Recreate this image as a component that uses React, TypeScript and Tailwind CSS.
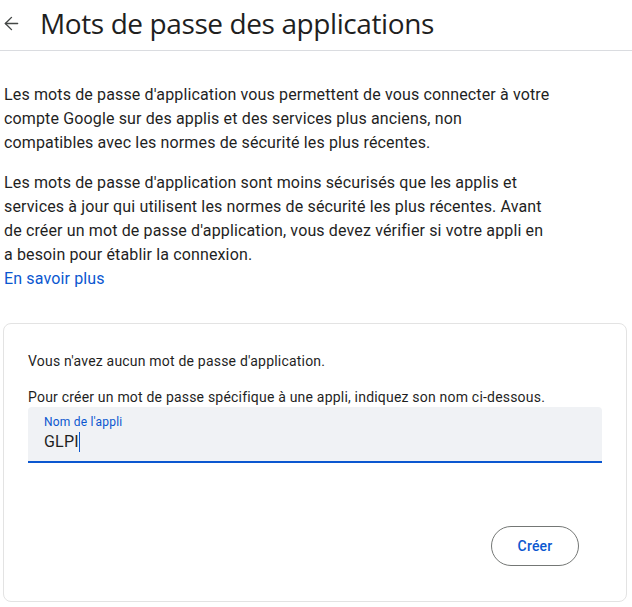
import { ArrowLeft } from "lucide-react";

const intro = [
  "Les mots de passe d'application vous permettent de vous connecter à votre",
  "compte Google sur des applis et des services plus anciens, non",
  "compatibles avec les normes de sécurité les plus récentes.",
];

const warning = [
  "Les mots de passe d'application sont moins sécurisés que les applis et",
  "services à jour qui utilisent les normes de sécurité les plus récentes. Avant",
  "de créer un mot de passe d'application, vous devez vérifier si votre appli en",
  "a besoin pour établir la connexion.",
];

export default function App() {
  return (
    <div className="w-[632px] h-[607px] bg-white text-[#1f1f1f] font-['Roboto','Liberation_Sans',sans-serif] overflow-hidden">
      {/* en-tête */}
      <div className="h-[51px] flex items-center border-b border-[#dadce0]">
        <ArrowLeft size={21} strokeWidth={1.6} className="text-[#444746] ml-[1px] mr-[18px] mt-[-3px]" />
        <h1 className="text-[28px] leading-9 text-[#1f1f1f] font-['Open_Sans','Roboto',sans-serif] tracking-[-0.4px] mt-[-5px]">
          Mots de passe des applications
        </h1>
      </div>

      {/* explications */}
      <div className="pl-1 pt-[32px] text-base leading-6 tracking-[0.14px] whitespace-nowrap">
        <p className="mb-4">
          {intro.map((l) => (
            <span key={l} className="block">{l}</span>
          ))}
        </p>
        <p>
          {warning.map((l) => (
            <span key={l} className="block">{l}</span>
          ))}
        </p>
        <a className="text-[#0b57d0]">En savoir plus</a>
      </div>

      {/* carte */}
      <div className="ml-[3px] mt-[32px] w-[624px] h-[279px] border border-[#e3e3e3] rounded-lg px-6 pt-[27px] text-sm leading-5 tracking-[0.2px] flex flex-col">
        <p className="mb-4">Vous n'avez aucun mot de passe d'application.</p>
        <p>Pour créer un mot de passe spécifique à une appli, indiquez son nom ci-dessous.</p>
        <div className="bg-[#f0f2f5] rounded-t h-[56px] border-b-2 border-[#0b57d0] px-4 pt-[7px]">
          <div className="text-xs leading-4 text-[#0b57d0]">Nom de l'appli</div>
          <div className="text-base leading-6 text-[#1f1f1f] flex items-center">
            GLPI<span className="inline-block w-px h-5 bg-[#0b57d0]" />
          </div>
        </div>
        <div className="flex justify-end mt-[63px] pr-[23px]">
          <button className="w-[88px] h-10 rounded-full border border-[#747775] text-[#0b57d0] text-sm font-medium">
            Créer
          </button>
        </div>
      </div>
    </div>
  );
}
